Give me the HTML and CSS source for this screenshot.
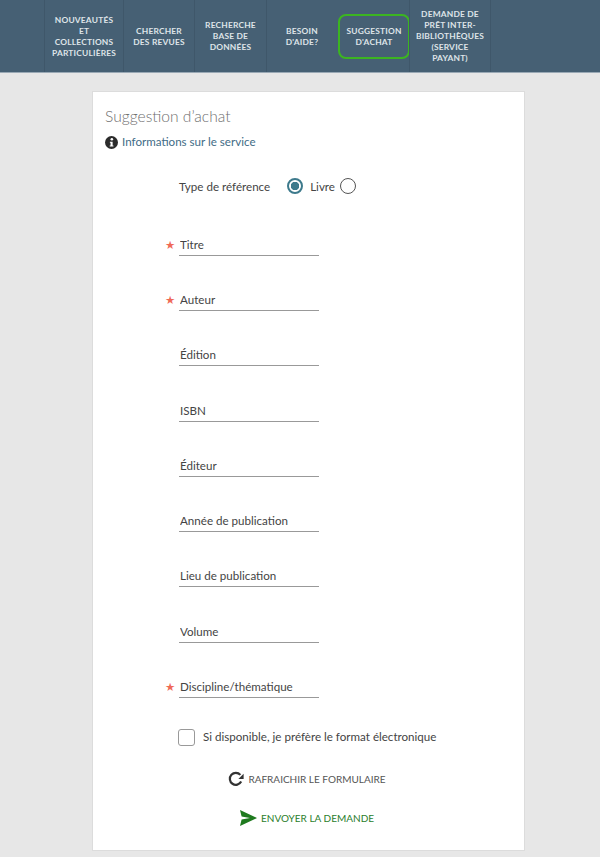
FILE: index.html
```html
<!DOCTYPE html>
<html lang="fr">

<head>
    <meta charset="UTF-8">
    <meta name="viewport" content="width=device-width, initial-scale=1.0">
    <title>Suggestion d'achat</title>
    <link rel="stylesheet" href="styles.css">
</head>

<body>
    <!-- Menu -->
    <nav class="topnav">
        <a class="nav-item" href="#">Nouveautés et collections particulières</a>
        <a class="nav-item" href="#">Chercher des revues</a>
        <a class="nav-item" href="#">Recherche base de données</a>
        <a class="nav-item" href="#">Besoin d'aide?</a>
        <a class="nav-item active" href="#">Suggestion d'achat</a>
        <a class="nav-item" href="#">Demande de prêt inter-bibliothèques (service payant)</a>
    </nav>

    <main class="card">
        <h1 class="card-title">Suggestion d’achat</h1>
        <a class="info-link" href="#">
            <svg class="info-icon" viewBox="0 0 16 16" width="13" height="13">
                <circle cx="8" cy="8" r="8" fill="#2b2b2b" />
                <circle cx="8.4" cy="4" r="1.6" fill="#fff" />
                <path d="M6 7h3.4v4.6h1V13H5.8v-1.4h1V8.4H6z" fill="#fff" />
            </svg>
            Informations sur le service
        </a>

        <form class="form">
            <div class="type-row">
                <span class="type-label">Type de référence</span>
                <span class="radio checked"></span>
                <span class="radio-label">Livre</span>
                <span class="radio"></span>
            </div>

            <div class="field required"><input type="text" placeholder="Titre"></div>
            <div class="field required"><input type="text" placeholder="Auteur"></div>
            <div class="field"><input type="text" placeholder="Édition"></div>
            <div class="field"><input type="text" placeholder="ISBN"></div>
            <div class="field"><input type="text" placeholder="Éditeur"></div>
            <div class="field"><input type="text" placeholder="Année de publication"></div>
            <div class="field"><input type="text" placeholder="Lieu de publication"></div>
            <div class="field"><input type="text" placeholder="Volume"></div>
            <div class="field required"><input type="text" placeholder="Discipline/thématique"></div>

            <label class="check-row">
                <span class="checkbox"></span>
                Si disponible, je préfère le format électronique
            </label>

            <div class="actions">
                <button type="reset" class="btn btn-refresh">
                    <svg viewBox="0 0 16 16" width="16" height="16">
                        <path d="M13.2 10.6A6 6 0 1 1 12.4 3.9" fill="none" stroke="#333" stroke-width="2.2" />
                        <path d="M15.6 2.8v5.2h-5.2z" fill="#333" />
                    </svg>
                    Rafraichir le formulaire
                </button>
                <button type="submit" class="btn btn-send">
                    <svg viewBox="0 0 17 16" width="17" height="16">
                        <path d="M0 0l17 8-17 8 1.6-6.4L10 8 1.6 6.4z" fill="#1f7a1f" />
                    </svg>
                    Envoyer la demande
                </button>
            </div>
        </form>
    </main>
</body>

</html>
```

FILE: styles.css
```css
body {
    font-family: "Lato", sans-serif;
    margin: 0;
    padding: 0;
    background-color: #e7e7e7;
    color: #444;
}

/* MENU */
.topnav {
    display: grid;
    grid-template-columns: 79px 71px 72px 71px 72px 82px;
    height: 72px;
    padding-left: 44px;
    background-color: #466074;
    border-bottom: 1px solid #9aa9b5;
}

.nav-item {
    display: flex;
    align-items: center;
    justify-content: center;
    box-sizing: border-box;
    padding: 1px 5px 0;
    border-left: 1px solid #3f576a;
    color: #dfe4e8;
    font-size: 8.4px;
    font-weight: 700;
    line-height: 11px;
    letter-spacing: 0.2px;
    text-align: center;
    text-transform: uppercase;
    text-decoration: none;
}

.nav-item:last-child {
    border-right: 1px solid #3f576a;
}

.nav-item.active {
    align-self: center;
    height: 45px;
    margin: 0 -1px 0 1px;
    border: 2px solid #3cb521;
    border-radius: 8px;
}

/* CARTE */
.card {
    box-sizing: border-box;
    width: 433px;
    margin: 18px 0 0 92px;
    padding: 13px 12px 23px;
    background: #fff;
    border: 1px solid #dcdcdc;
}

.card-title {
    margin: 0;
    font-size: 15.6px;
    font-weight: 300;
    line-height: 22px;
    color: #6f6f6f;
}

.info-link {
    display: flex;
    align-items: center;
    gap: 4px;
    margin-top: 6px;
    font-size: 11.6px;
    line-height: 18px;
    color: #3f6c86;
    text-decoration: none;
}

.form {
    margin-left: 74px;
}

.type-row {
    display: flex;
    align-items: center;
    height: 18px;
    margin-top: 26px;
    font-size: 11.6px;
    color: #444;
}

.type-label {
    margin-right: 17px;
}

.radio {
    box-sizing: border-box;
    width: 16px;
    height: 16px;
    border: 1.5px solid #555;
    border-radius: 50%;
}

.radio.checked {
    border: 2px solid #3d7a8c;
    background: radial-gradient(circle, #3d7a8c 0 4px, #fff 4.5px);
}

.radio-label {
    margin: 0 5px 0 7px;
}

.field {
    position: relative;
    height: 55.25px;
}

.type-row + .field {
    margin-top: 5.6px;
}

.field input {
    box-sizing: border-box;
    position: absolute;
    left: 0;
    bottom: 0;
    width: 140px;
    height: 21px;
    padding: 0 1px 1px;
    border: none;
    border-bottom: 1px solid #999;
    outline: none;
    background: none;
    font-family: inherit;
    font-size: 11.6px;
}

.field input::placeholder {
    color: #444;
    opacity: 1;
}

.required::before {
    content: "★";
    position: absolute;
    left: -14px;
    bottom: 4px;
    font-family: "DejaVu Sans", sans-serif;
    font-size: 11.5px;
    line-height: 14px;
    color: #ef6a57;
}

.check-row {
    display: flex;
    align-items: center;
    gap: 8px;
    margin: 30.4px 0 0 -1px;
    font-size: 11.6px;
    line-height: 18px;
    color: #444;
}

.checkbox {
    box-sizing: border-box;
    width: 17px;
    height: 17px;
    border: 1px solid #999;
    border-radius: 3px;
}

.actions {
    display: flex;
    flex-direction: column;
    align-items: center;
    gap: 21px;
    margin-top: 24px;
    width: 256px;
}

.btn {
    display: flex;
    align-items: center;
    gap: 4px;
    padding: 0;
    border: none;
    background: none;
    font-family: inherit;
    font-size: 10px;
    line-height: 18px;
    text-transform: uppercase;
}

.btn-refresh {
    color: #555;
}

.btn-send {
    color: #2a7d2a;
}
```
